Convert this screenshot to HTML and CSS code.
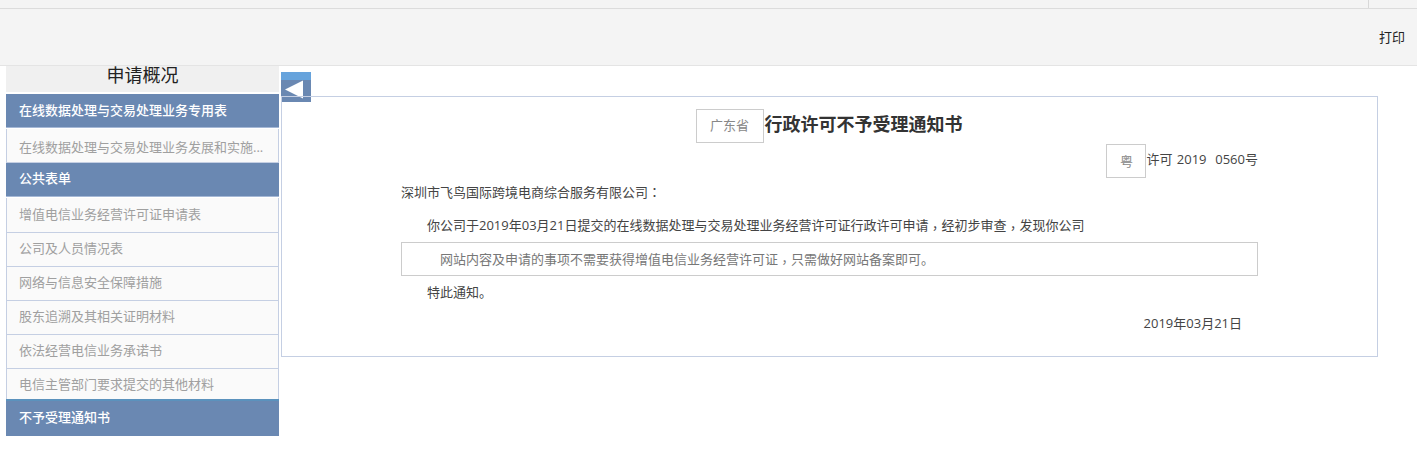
FILE: index.html
```html
<!DOCTYPE html>
<html lang="zh-CN">
<head>
<meta charset="utf-8">
<title>行政许可不予受理通知书</title>
<link rel="stylesheet" href="styles.css">
</head>
<body>
<div class="topstrip"><span class="topdivider"></span></div>
<header class="toolbar"><a class="print">打印</a></header>
<div class="page">
  <aside class="sidebar">
    <div class="sidebar-title">申请概况</div>
    <div class="group first">在线数据处理与交易处理业务专用表</div>
    <div class="item item-single">在线数据处理与交易处理业务发展和实施...</div>
    <div class="group middle">公共表单</div>
    <div class="item item-top">增值电信业务经营许可证申请表</div>
    <div class="item">公司及人员情况表</div>
    <div class="item">网络与信息安全保障措施</div>
    <div class="item">股东追溯及其相关证明材料</div>
    <div class="item">依法经营电信业务承诺书</div>
    <div class="item last">电信主管部门要求提交的其他材料</div>
    <div class="group final">不予受理通知书</div>
  </aside>
  <main class="content">
    <div class="toggle">
      <svg width="30" height="22" viewBox="0 0 30 22"><path d="M4 9.500 L22 0.500 L22 18.500 Z" fill="#fff"/></svg>
    </div>
    <section class="panel">
      <h1 class="doc-title"><span class="field field-prov">广东省</span>行政许可不予受理通知书</h1>
      <div class="doc-no"><span class="field field-short">粤</span><span class="doc-no-text">许可 2019&nbsp; 0560号</span></div>
      <p class="greeting">深圳市飞鸟国际跨境电商综合服务有限公司<span class="punct" lang="zh-TW">：</span></p>
      <p class="para para-main">你公司于2019年03月21日提交的在线数据处理与交易处理业务经营许可证行政许可申请<span class="punct comma" lang="zh-TW">，</span>经初步审查<span class="punct comma" lang="zh-TW">，</span>发现你公司</p>
      <div class="reason">网站内容及申请的事项不需要获得增值电信业务经营许可证<span class="punct comma" lang="zh-TW">，</span>只需做好网站备案即可。</div>
      <p class="para notice">特此通知。</p>
      <p class="date">2019年03月21日</p>
    </section>
  </main>
</div>
</body>
</html>
```
FILE: styles.css
```css
* { box-sizing: border-box; }
html, body { margin: 0; padding: 0; }
body {
  background: #fff;
  color: #444;
  font-family: "Open Sans", "Noto Sans CJK SC", sans-serif;
  font-size: 13px;
  height: 468px;
  overflow: hidden;
}
.punct { font-family: "Noto Sans CJK TC", sans-serif; }
.comma { vertical-align: -3px; line-height: 1; }
.topstrip {
  height: 9px;
  background: #f4f4f4;
  border-bottom: 1px solid #dcdcdc;
  display: flex;
  justify-content: flex-end;
  padding-right: 48px;
}
.topdivider { width: 1px; height: 8px; background: #d8d8d8; }
.toolbar {
  height: 57px;
  background: #f4f4f4;
  border-bottom: 1px solid #e4e4e4;
  display: flex;
  justify-content: flex-end;
  align-items: center;
  padding-right: 12px;
}
.print { color: #222; font-size: 13px; line-height: 20px; }
.page { display: flex; align-items: flex-start; padding-left: 6px; }
.sidebar { width: 273px; flex: none; }
.sidebar-title {
  height: 26px;
  background: #f0f0f0;
  color: #222;
  font-size: 18px;
  line-height: 18px;
  text-align: center;
}
.group {
  height: 34px;
  margin-bottom: 1px;
  background: #6a88b2;
  color: #fff;
  font-weight: 500;
  line-height: 32px;
  padding-left: 13px;
  border-bottom: 1px solid #a5b8d6;
}
.group.first { margin-top: 2px; }
.group.middle { line-height: 30px; }
.group.final {
  height: 37px;
  margin-bottom: 0;
  line-height: 33px;
  border-bottom: 0;
  border-top: 2px solid #5b92bd;
}
.item {
  height: 34px;
  background: #fafafa;
  color: #a0a0a0;
  line-height: 31px;
  padding-left: 12px;
  border-left: 1px solid #c5cfe3;
  border-right: 1px solid #c5cfe3;
  border-bottom: 1px solid #c5cfe3;
  white-space: nowrap;
  overflow: hidden;
}
.item-single { padding-top: 3px; }
.item-top { height: 35px; padding-top: 1px; }
.item.last { height: 30px; border-bottom: 0; }
.content { position: relative; flex: none; width: 1097px; margin-left: 2px; padding-top: 30px; }
.toggle {
  position: absolute;
  left: 0;
  top: 6px;
  width: 30px;
  height: 30px;
  background: #6a88b2;
  border-top: 8px solid #66a3dc;
}
.toggle svg { display: block; }
.panel {
  position: relative;
  height: 261px;
  border: 1px solid #c5cfe3;
  padding: 12px 119px 0;
}
.doc-title {
  margin: 0;
  height: 34px;
  display: flex;
  justify-content: center;
  align-items: flex-start;
  font-size: 18px;
  font-weight: 700;
  line-height: 30px;
  color: #333;
  white-space: nowrap;
  padding-right: 1px;
}
.field {
  display: inline-flex;
  align-items: center;
  justify-content: center;
  height: 34px;
  border: 1px solid #ccc;
  color: #888;
  font-size: 13px;
  font-weight: 400;
  flex: none;
}
.field-prov { width: 68px; padding-bottom: 3px; margin-right: 1px; }
.field-short { width: 40px; padding-bottom: 1px; }
.doc-no {
  display: flex;
  justify-content: flex-end;
  align-items: center;
  height: 34px;
  margin-top: 1px;
}
.doc-no-text { line-height: 30px; margin-bottom: 4px; word-spacing: 1px; }
.greeting { margin: 1px 0 0; height: 26px; line-height: 26px; }
.para { margin: 0; padding-left: 26px; line-height: 20px; }
.para-main { margin-top: 10px; height: 27px; }
.reason {
  height: 34px;
  border: 1px solid #ccc;
  color: #777;
  line-height: 32px;
  padding-left: 38px;
}
.notice { margin-top: 6px; }
.date { margin: 11px 0 0; line-height: 20px; text-align: right; padding-right: 16px; }
```
